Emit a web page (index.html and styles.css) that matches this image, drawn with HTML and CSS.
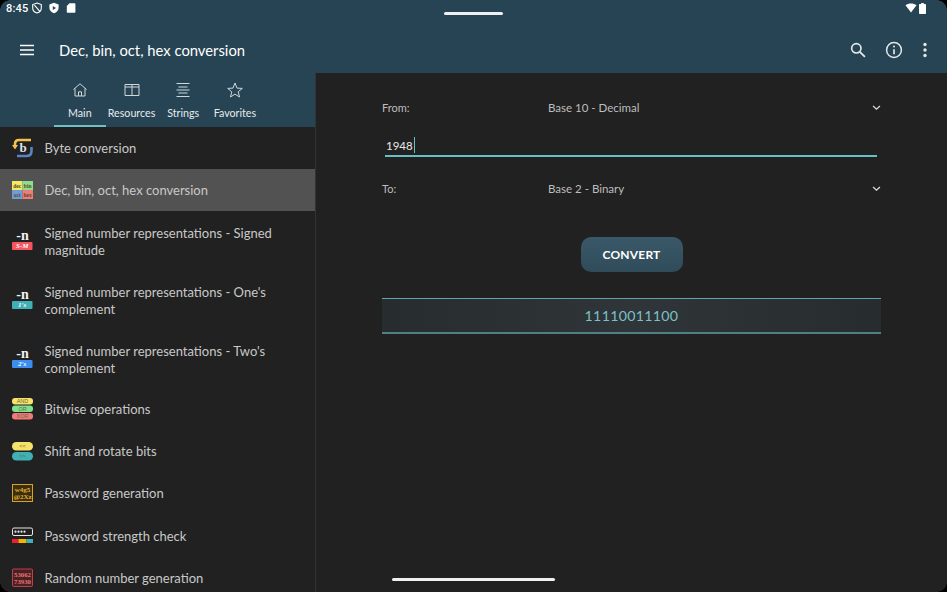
FILE: index.html
```html
<!DOCTYPE html>
<html lang="en">
<head>
<meta charset="utf-8">
<title>Dec, bin, oct, hex conversion</title>
<link rel="stylesheet" href="styles.css">
</head>
<body>
<div class="screen">
  <header class="appbar">
    <div class="status">
      <div class="status-left">
        <span class="clock">8:45</span>
        <svg class="si" viewBox="0 0 12 12"><path d="M6 1 L10.3 2.6 V6 C10.3 8.5 8.3 10.3 6 11 C3.7 10.3 1.7 8.5 1.7 6 V2.6 Z M3.4 3.2 L8.8 9.4" fill="none" stroke="#fff" stroke-width="1.1"/></svg>
        <svg class="si si-gap" viewBox="0 0 12 12"><path d="M6 .8 L10.6 2.5 V6 C10.6 8.6 8.4 10.5 6 11.2 C3.6 10.5 1.4 8.6 1.4 6 V2.5 Z" fill="#fff"/><path d="M4.8 3.9 L8 6 L4.8 8.1 Z" fill="#264453"/></svg>
        <svg class="si si-gap" viewBox="0 0 12 12"><path d="M4.5 1.2 H9.6 Q10.4 1.2 10.4 2 V10 Q10.4 10.8 9.6 10.8 H2.6 Q1.8 10.8 1.8 10 V3.9 Z" fill="#fff"/></svg>
      </div>
      <div class="status-right">
        <svg class="wifi" viewBox="0 0 12 10"><path d="M0.5 2.2 C3.5 -.2 8.5 -.2 11.5 2.2 L6 9.4 Z" fill="#fff"/></svg>
        <svg class="batt" viewBox="0 0 7 11"><path d="M2.2 0 H4.8 V1 H6.2 Q7 1 7 1.8 V10.2 Q7 11 6.2 11 H.8 Q0 11 0 10.2 V1.8 Q0 1 .8 1 H2.2 Z" fill="#fff"/></svg>
      </div>
    </div>
    <div class="toolbar">
      <svg class="menu" viewBox="0 0 16 12"><path d="M1 1.5 H15 M1 6 H15 M1 10.5 H15" stroke="#fff" stroke-width="1.5" fill="none"/></svg>
      <h1 class="title">Dec, bin, oct, hex conversion</h1>
      <div class="actions">
        <svg class="act" viewBox="0 0 24 24"><circle cx="10" cy="10" r="5.6" fill="none" stroke="#e4e8ea" stroke-width="2"/><path d="M14.2 14.2 L20.3 20.3" stroke="#e4e8ea" stroke-width="2.2"/></svg>
        <svg class="act" viewBox="0 0 24 24"><circle cx="12" cy="12" r="8.9" fill="none" stroke="#e4e8ea" stroke-width="1.8"/><path d="M12 11 V17" stroke="#e4e8ea" stroke-width="2"/><circle cx="12" cy="7.9" r="1.2" fill="#e4e8ea"/></svg>
        <svg class="act act-more" viewBox="0 0 6 20"><circle cx="3" cy="4.5" r="1.7" fill="#e4e8ea"/><circle cx="3" cy="10" r="1.7" fill="#e4e8ea"/><circle cx="3" cy="15.5" r="1.7" fill="#e4e8ea"/></svg>
      </div>
    </div>
  </header>
  <div class="body">
    <aside class="sidebar">
      <nav class="tabs">
        <div class="tab tab-on">
          <svg class="tab-ic" viewBox="0 0 16 16"><path d="M1.5 7.5 L8 1.8 L14.5 7.5 M3 6.5 V14 H13 V6.5 M6.5 14 V9.8 H9.5 V14" fill="none" stroke="#cfd8dc" stroke-width="1"/></svg>
          <span>Main</span>
        </div>
        <div class="tab">
          <svg class="tab-ic" viewBox="0 0 16 16"><path d="M1 2.5 H15 V13.5 H1 Z M8 2.5 V13.5 M1 5 H15" fill="none" stroke="#cfd8dc" stroke-width="1"/></svg>
          <span>Resources</span>
        </div>
        <div class="tab">
          <svg class="tab-ic" viewBox="0 0 16 16"><path d="M1.5 1.5 H14.5 M3.5 5 H12.5 M1.5 8 H14.5 M3.5 11 H12.5 M1.5 14.5 H14.5" fill="none" stroke="#cfd8dc" stroke-width="1"/></svg>
          <span>Strings</span>
        </div>
        <div class="tab">
          <svg class="tab-ic" viewBox="0 0 16 16"><path d="M8 1 L10 6.1 L15.3 6.4 L11.2 9.8 L12.5 15 L8 12.1 L3.5 15 L4.8 9.8 L.7 6.4 L6 6.1 Z" fill="none" stroke="#cfd8dc" stroke-width="1"/></svg>
          <span>Favorites</span>
        </div>
      </nav>
      <ul class="list">
        <li class="row">
          <svg class="ic" viewBox="0 0 22 22"><path d="M3 9 V7 Q3 3 7 3 H19" fill="none" stroke="#f2c14e" stroke-width="2.6"/><path d="M0 8 H6 L3 12.5 Z" fill="#f2c14e"/><path d="M19.5 10 V14 Q19.5 19 14.5 19 H5" fill="none" stroke="#5b84c4" stroke-width="2.6"/><text x="11" y="15" class="ic-b">b</text></svg>
          <span>Byte conversion</span>
        </li>
        <li class="row row-on">
          <svg class="ic" viewBox="0 0 22 22"><rect x="0" y="2" width="10.5" height="9" fill="#f5e663"/><rect x="10.5" y="2" width="10.5" height="9" fill="#8fdc8f"/><rect x="0" y="11" width="10.5" height="9" fill="#6f9bd8"/><rect x="10.5" y="11" width="10.5" height="9" fill="#f07a7a"/><text x="5.2" y="8.5" class="ic-t">dec</text><text x="15.7" y="8.5" class="ic-t">bin</text><text x="5.2" y="17.5" class="ic-t">oct</text><text x="15.7" y="17.5" class="ic-t">hex</text></svg>
          <span>Dec, bin, oct, hex conversion</span>
        </li>
        <li class="row row-tall">
          <svg class="ic ic-high" viewBox="0 -4 22 30"><text x="10.5" y="10" class="ic-n">-n</text><rect x="0" y="12" width="20.5" height="8" rx="1" fill="#f4555f"/><text x="10.2" y="18.4" class="ic-s">S-M</text></svg>
          <span>Signed number representations - Signed magnitude</span>
        </li>
        <li class="row row-tall">
          <svg class="ic ic-high" viewBox="0 -4 22 30"><text x="10.5" y="10" class="ic-n">-n</text><rect x="0" y="12" width="20.5" height="8" rx="1" fill="#3fb0b5"/><text x="10.2" y="18.4" class="ic-s">1's</text></svg>
          <span>Signed number representations - One's complement</span>
        </li>
        <li class="row row-tall">
          <svg class="ic ic-high" viewBox="0 -4 22 30"><text x="10.5" y="10" class="ic-n">-n</text><rect x="0" y="12" width="20.5" height="8" rx="1" fill="#3c8df0"/><text x="10.2" y="18.4" class="ic-s">2's</text></svg>
          <span>Signed number representations - Two's complement</span>
        </li>
        <li class="row">
          <svg class="ic" viewBox="0 0 22 22"><rect x="0" y="0" width="21" height="6.5" rx="3" fill="#f6e36a"/><rect x="0" y="7.5" width="21" height="6.5" rx="3" fill="#7fe08f"/><rect x="0" y="15" width="21" height="6.5" rx="3" fill="#f47a7a"/><text x="10.5" y="5.3" class="ic-o">AND</text><text x="10.5" y="12.8" class="ic-o">OR</text><text x="10.5" y="20.3" class="ic-o">XOR</text></svg>
          <span>Bitwise operations</span>
        </li>
        <li class="row">
          <svg class="ic" viewBox="0 0 22 22"><rect x="0" y="1" width="21" height="8.6" rx="4.3" fill="#f6e36a"/><rect x="0" y="11" width="21" height="8.6" rx="4.3" fill="#3fb0b5"/><text x="10.5" y="7" class="ic-o">&lt;&lt;</text><text x="10.5" y="17" class="ic-o">&gt;&gt;</text></svg>
          <span>Shift and rotate bits</span>
        </li>
        <li class="row">
          <svg class="ic" viewBox="0 0 22 22"><rect x=".5" y="1.5" width="20" height="17" fill="#3a2f12" stroke="#d9a21f"/><text x="10.5" y="9" class="ic-p">w4g5</text><text x="10.5" y="16.2" class="ic-p">@2Xz</text></svg>
          <span>Password generation</span>
        </li>
        <li class="row">
          <svg class="ic" viewBox="0 0 22 22"><rect x=".5" y="3" width="20" height="7.5" rx="1.5" fill="none" stroke="#e6e6e6"/><circle cx="3.5" cy="6.7" r="1.1" fill="#e6e6e6"/><circle cx="6.5" cy="6.7" r="1.1" fill="#e6e6e6"/><circle cx="9.5" cy="6.7" r="1.1" fill="#e6e6e6"/><circle cx="12.5" cy="6.7" r="1.1" fill="#e6e6e6"/><rect x="0" y="14" width="6.5" height="4" fill="#f01d2c"/><rect x="6.5" y="14" width="8" height="4" fill="#f4b400"/><rect x="14.5" y="14" width="6.5" height="4" fill="#3fb0b5"/></svg>
          <span>Password strength check</span>
        </li>
        <li class="row">
          <svg class="ic" viewBox="0 0 22 22"><rect x=".5" y="2" width="20" height="17.5" rx="1" fill="#4a2022" stroke="#b8434a"/><text x="10.5" y="9.5" class="ic-r">53062</text><text x="10.5" y="16.8" class="ic-r">73930</text></svg>
          <span>Random number generation</span>
        </li>
      </ul>
    </aside>
    <main class="main">
      <div class="select-row">
        <span class="sel-label">From:</span>
        <span class="sel-value">Base 10 - Decimal</span>
        <svg class="chev" viewBox="0 0 10 6"><path d="M1.2 1 L5 4.6 L8.8 1" fill="none" stroke="#d6d6d6" stroke-width="1.5"/></svg>
      </div>
      <div class="input"><span>1948</span><i class="caret"></i></div>
      <div class="select-row select-to">
        <span class="sel-label">To:</span>
        <span class="sel-value">Base 2 - Binary</span>
        <svg class="chev" viewBox="0 0 10 6"><path d="M1.2 1 L5 4.6 L8.8 1" fill="none" stroke="#d6d6d6" stroke-width="1.5"/></svg>
      </div>
      <button class="convert" type="button">CONVERT</button>
      <output class="result">11110011100</output>
    </main>
  </div>
  <div class="pill-top"></div>
  <div class="pill-bottom"></div>
  <i class="corner c-tl"></i><i class="corner c-tr"></i><i class="corner c-bl"></i><i class="corner c-br"></i>
</div>
</body>
</html>
```
FILE: styles.css
```css
* { box-sizing: border-box; }
html, body { margin: 0; padding: 0; background: #000; }
.screen {
  position: relative;
  width: 947px;
  height: 592px;
  overflow: hidden;
  display: flex;
  flex-direction: column;
  background: #212121;
  font-family: "Lato", "Noto Sans", sans-serif;
  color: #cfcfcf;
}
.appbar { height: 73px; flex: none; background: #264453; color: #fff; }
.status {
  height: 18px;
  display: flex;
  justify-content: space-between;
  align-items: center;
  padding: 0 21px 2px 6px;
}
.status-left, .status-right { display: flex; align-items: center; }
.clock { font-size: 11px; font-weight: 500; margin-right: 2px; font-family: "Roboto", sans-serif; letter-spacing: .2px; }
.si { width: 12px; height: 12px; margin-left: 1px; }
.si-gap { margin-left: 5px; }
.wifi { width: 12px; height: 10px; margin-right: 2px; }
.batt { width: 7px; height: 11px; }
.toolbar {
  height: 55px;
  display: flex;
  align-items: center;
  padding: 9px 19px 0 19px;
}
.menu { width: 16px; height: 12px; }
.title { margin: 0 0 0 24px; font-size: 14.8px; font-weight: 400; flex: 1; white-space: nowrap; }
.actions { display: flex; align-items: center; gap: 16px; }
.act { width: 20px; height: 20px; }
.act-more { width: 6px; margin-left: 2px; }
.body { flex: 1; display: flex; min-height: 0; }
.sidebar {
  width: 316px;
  flex: none;
  border-right: 1px solid #333;
  overflow: hidden;
  display: flex;
  flex-direction: column;
}
.tabs {
  height: 54px;
  flex: none;
  background: #264453;
  display: flex;
  padding-left: 54px;
}
.tab {
  width: 51.7px;
  height: 54px;
  display: flex;
  flex-direction: column;
  align-items: center;
  padding-top: 9px;
  font-size: 10.7px;
  color: #e6ebed;
  white-space: nowrap;
}
.tab span { margin-top: 8px; line-height: 14px; }
.tab-on { border-bottom: 2px solid #6cc0c6; }
.tab-ic { width: 16px; height: 16px; flex: none; }
.list { list-style: none; margin: 0; padding: 0; }
.row {
  height: 42.2px;
  display: flex;
  align-items: center;
  padding: 0 30px 0 12px;
  font-size: 13px;
  line-height: 17px;
  color: #c8c8c8;
}
.row span { margin-left: 10.5px; }
.row-tall { height: 59px; padding-top: 2px; }
.row-on { background: #525252; }
.ic { width: 22px; height: 22px; flex: none; }
.ic-high { height: 30px; margin-top: -2px; }
.ic text { text-anchor: middle; font-family: "Liberation Serif", serif; }
.ic-b { font-size: 13px; font-weight: 700; fill: #dfe3e8; }
.ic-t { font-size: 5.5px; font-weight: 700; fill: #55501c; }
.ic-n { font-size: 14px; font-weight: 700; fill: #f2f2f2; }
.ic-s { font-size: 7px; font-style: italic; font-weight: 700; fill: #fff; }
.ic .ic-o { font-size: 5.5px; fill: #6e6a3a; font-family: "Liberation Sans", sans-serif; }
.ic-p { font-size: 7px; font-weight: 700; fill: #e6ae2a; }
.ic-r { font-size: 6.8px; font-weight: 700; fill: #e8757b; }
.main { flex: 1; min-width: 0; padding: 24px 66px 0; display: flex; flex-direction: column; align-items: center; }
.select-row {
  width: 100%;
  height: 20px;
  display: flex;
  align-items: center;
  font-size: 11.5px;
  color: #bdbdbd;
}
.sel-label { width: 166px; flex: none; font-size: 11px; }
.sel-value { flex: 1; }
.chev { width: 9px; height: 5.4px; margin-top: 1px; }
.input {
  width: 100%;
  height: 32px;
  margin-top: 8px;
  padding: 8px 4px 0;
  display: flex;
  align-items: center;
  font-size: 11.5px;
  color: #e8e8e8;
  position: relative;
}
.input::after {
  content: "";
  position: absolute;
  left: 3px;
  right: 4px;
  bottom: 0;
  height: 2px;
  background: #66bfc4;
}
.caret { width: 1.5px; height: 16px; background: #66bfc4; margin-left: 1px; }
.select-to { margin-top: 21px; }
.convert {
  width: 102px;
  height: 35px;
  margin-top: 39px;
  border: 0;
  border-radius: 10px;
  background: linear-gradient(#3a5868, #304c5b);
  color: #fff;
  font: 700 12px "Lato", sans-serif;
  letter-spacing: .2px;
}
.result {
  width: 100%;
  height: 36px;
  margin-top: 26px;
  border-top: 1px solid #5fa5a9;
  border-bottom: 2px solid #4d8185;
  background: linear-gradient(90deg, #272c2e, #2f3538 50%, #272c2e);
  color: #7cc0c8;
  font-size: 14.2px;
  letter-spacing: .3px;
  display: flex;
  align-items: center;
  justify-content: center;
}
.pill-top { position: absolute; left: 444px; top: 12px; width: 59px; height: 3px; border-radius: 2px; background: #f0f0f0; }
.pill-bottom { position: absolute; left: 392px; top: 578px; width: 163px; height: 3px; border-radius: 2px; background: #f0f0f0; }
.corner { position: absolute; width: 10px; height: 10px; }
.c-tl { left: 0; top: 0; background: radial-gradient(circle at 100% 100%, transparent 9.5px, #000 10px); }
.c-tr { right: 0; top: 0; background: radial-gradient(circle at 0 100%, transparent 9.5px, #000 10px); }
.c-bl { left: 0; bottom: 0; background: radial-gradient(circle at 100% 0, transparent 9.5px, #000 10px); }
.c-br { right: 0; bottom: 0; background: radial-gradient(circle at 0 0, transparent 9.5px, #000 10px); }
```
